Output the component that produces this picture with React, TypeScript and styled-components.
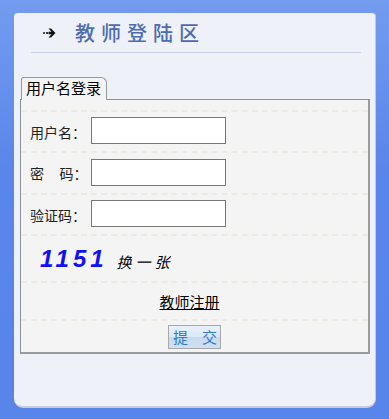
import React from "react";
import { createGlobalStyle, styled } from "styled-components";

const Global = createGlobalStyle`
  html, body {
    margin: 0;
    padding: 0;
  }
  body {
    width: 389px;
    height: 419px;
    overflow: hidden;
    background: linear-gradient(#739bef, #5a86ea 40%, #5785ea);
    font-family: "Liberation Sans", "Noto Sans CJK SC", sans-serif;
  }
`;

const Panel = styled.div`
  margin: 13px 0 0 14px;
  width: 362px;
  height: 395px;
  box-sizing: border-box;
  background: #eef1f7;
  border-radius: 4px 4px 9px 9px;
  border-right: 1px solid #c9ccd6;
  border-bottom: 2px solid #c9ccd6;
  padding: 0 5px 0 6px;
`;

const TitleBar = styled.div`
  margin: 0 9px 0 11px;
  height: 39px;
  display: flex;
  align-items: center;
  border-bottom: 1px solid #c6cfe2;
`;

const Arrow = styled.svg`
  margin-left: 12px;
  width: 13px;
  height: 10px;
`;

const Title = styled.span`
  margin-left: 19px;
  font-family: "Noto Sans CJK SC", sans-serif;
  font-weight: 500;
  font-size: 20px;
  letter-spacing: 6px;
  color: #4d6cb0;
`;

const Tabs = styled.div`
  margin-top: 24px;
  display: flex;
`;

const Tab = styled.div`
  margin-left: 1px;
  height: 23px;
  box-sizing: border-box;
  padding: 0 5px 0 4px;
  border: 1px solid #999;
  border-bottom: none;
  border-radius: 3px 6px 0 0;
  background: #f4f4f4;
  font-size: 15px;
  line-height: 22px;
  color: #000;
  position: relative;
  z-index: 1;
  margin-bottom: -1px;
`;

const Box = styled.div`
  width: 350px;
  height: 255px;
  box-sizing: border-box;
  border: 1px solid #8f8f8f;
  border-right-width: 2px;
  border-bottom-width: 2px;
  border-color: #8f8f8f #9a9a9a #9a9a9a #8f8f8f;
  background: #f4f4f4;
  padding-top: 10px;
`;

const Row = styled.div<{ $h: number; $center?: boolean }>`
  height: ${(p) => p.$h}px;
  box-sizing: border-box;
  display: flex;
  align-items: center;
  justify-content: ${(p) => (p.$center ? "center" : "flex-start")};
  padding-left: ${(p) => (p.$center ? 0 : 9)}px;
  border-top: 2px dashed #ebebe4;
`;

const Label = styled.span`
  width: 61px;
  font-size: 14px;
  color: #222;
  white-space: pre;
`;

const Input = styled.input`
  width: 135px;
  height: 27px;
  box-sizing: border-box;
  border: 1px solid #777;
  background: #fff;
  outline: none;
  padding: 0 3px;
  margin: -2px 0 0;
`;

const Code = styled.span`
  margin-left: 10px;
  font-size: 24px;
  font-weight: bold;
  font-style: italic;
  letter-spacing: 4px;
  color: #1010f4;
`;

const Refresh = styled.span`
  margin-left: 9px;
  margin-top: 5px;
  font-size: 15px;
  font-style: italic;
  letter-spacing: 4px;
  color: #000;
`;

const Link = styled.a`
  margin-right: 10px;
  font-size: 15px;
  color: #000;
  text-decoration: underline;
`;

const Submit = styled.button`
  width: 53px;
  height: 24px;
  padding: 0 3px 0 4px;
  display: flex;
  align-items: center;
  justify-content: space-between;
  border: 1px solid #a8a8a8;
  background: linear-gradient(#e8f1fc 0%, #dbe8f7 50%, #c8daee 51%, #d0e0f1 100%);
  color: #2c79cc;
  font-size: 15px;
  font-family: "Noto Sans CJK SC", sans-serif;
`;

const fields = [
  { label: "用户名：", type: "text", h: 41 },
  { label: "密    码：", type: "password", h: 42 },
  { label: "验证码：", type: "text", h: 41 },
];

export default function App() {
  return (
    <>
      <Global />
      <Panel>
        <TitleBar>
          <Arrow viewBox="0 0 13 10">
            <rect x="0" y="4" width="2" height="2" fill="#555" />
            <rect x="3" y="4" width="2" height="2" fill="#333" />
            <path d="M5.5 0.5L8 0.5 12.5 5 8 9.5 5.5 9.5 8.5 6.3H5.5V3.7H8.5z" fill="#111" />
          </Arrow>
          <Title>教师登陆区</Title>
        </TitleBar>
        <Tabs>
          <Tab>用户名登录</Tab>
        </Tabs>
        <Box>
          {fields.map((f) => (
            <Row $h={f.h} key={f.label}>
              <Label>{f.label}</Label>
              <Input type={f.type} />
            </Row>
          ))}
          <Row $h={47}>
            <Code>1151</Code>
            <Refresh>换一张</Refresh>
          </Row>
          <Row $h={38} $center>
            <Link href="#">教师注册</Link>
          </Row>
          <Row $h={33} $center>
            <Submit>
              <span>提</span>
              <span>交</span>
            </Submit>
          </Row>
        </Box>
      </Panel>
    </>
  );
}
